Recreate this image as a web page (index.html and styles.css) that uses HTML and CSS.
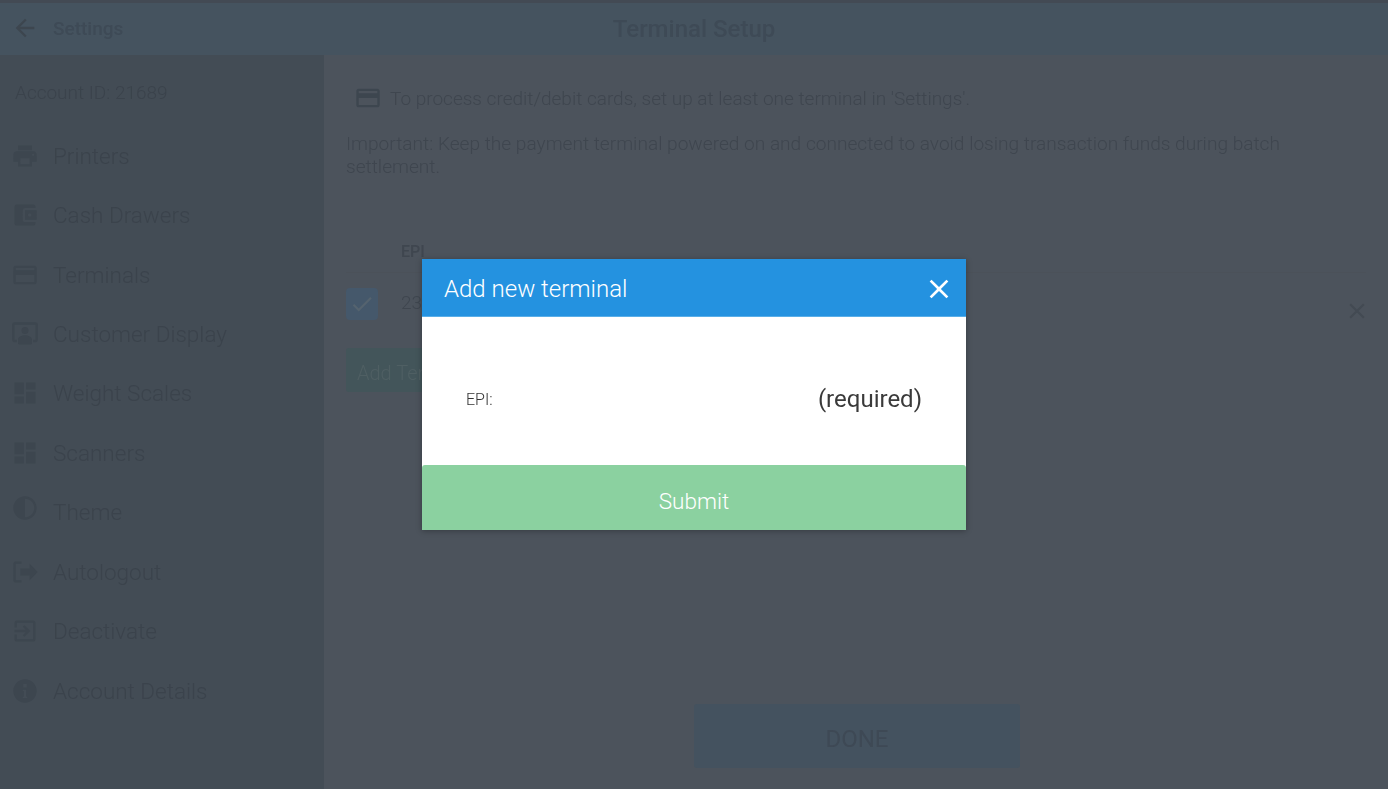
FILE: index.html
```html
<!DOCTYPE html>
<html lang="en">
<head>
  <meta charset="UTF-8">
  <title>Terminal Setup</title>
  <link rel="stylesheet" href="styles.css">
</head>
<body>
  <div class="app">
    <header class="topbar">
      <div class="back">
        <svg class="icon" viewBox="0 0 24 24"><path d="M20 11H7.830l5.590-5.590L12 4l-8 8 8 8 1.410-1.410L7.830 13H20v-2z"/></svg>
        <span>Settings</span>
      </div>
      <h1>Terminal Setup</h1>
    </header>
    <div class="main">
      <aside class="sidebar">
        <div class="account">Account ID: 21689</div>
        <ul class="menu">
          <li><svg class="icon" viewBox="0 0 24 24"><path d="M19 8H5c-1.660 0-3 1.340-3 3v6h4v4h12v-4h4v-6c0-1.660-1.340-3-3-3zm-3 11H8v-5h8v5zm3-7c-.55 0-1-.45-1-1s.45-1 1-1 1 .45 1 1-.45 1-1 1zm-1-9H6v4h12V3z"/></svg>Printers</li>
          <li><svg class="icon" viewBox="0 0 24 24"><path d="M21 18v1c0 1.100-.89 2-2 2H5c-1.110 0-2-.9-2-2V5c0-1.100.89-2 2-2h14c1.100 0 2 .9 2 2v1h-9c-1.110 0-2 .9-2 2v8c0 1.100.89 2 2 2h9zm-9-2h10V8H12v8zm4-2.500c-.83 0-1.500-.67-1.500-1.500s.67-1.500 1.500-1.500 1.500.67 1.500 1.500-.67 1.500-1.500 1.500z"/></svg>Cash Drawers</li>
          <li><svg class="icon" viewBox="0 0 24 24"><path d="M20 4H4c-1.110 0-1.990.89-1.990 2L2 18c0 1.110.89 2 2 2h16c1.110 0 2-.89 2-2V6c0-1.110-.89-2-2-2zm0 14H4v-6h16v6zm0-10H4V6h16v2z"/></svg>Terminals</li>
          <li><svg class="icon" viewBox="0 0 24 24"><path d="M21 2H3C1.900 2 1 2.900 1 4v13c0 1.100.9 2 2 2h2v-2H3V4h18v13h-2v2h2c1.100 0 2-.9 2-2V4c0-1.100-.9-2-2-2zM12 6a3 3 0 1 0 0 6 3 3 0 0 0 0-6zm0 7c-3 0-6 1.500-6 3.500V20c0 .6.4 1 1 1h10c.6 0 1-.4 1-1v-3.500c0-2-3-3.500-6-3.500z"/></svg>Customer Display</li>
          <li><svg class="icon" viewBox="0 0 24 24"><path d="M3 13h8V3H3v10zm0 8h8v-6H3v6zm10 0h8V11h-8v10zm0-18v6h8V3h-8z"/></svg>Weight Scales</li>
          <li><svg class="icon" viewBox="0 0 24 24"><path d="M3 13h8V3H3v10zm0 8h8v-6H3v6zm10 0h8V11h-8v10zm0-18v6h8V3h-8z"/></svg>Scanners</li>
          <li><svg class="icon icon-raised" viewBox="0 0 24 24"><path d="M12 2C6.500 2 2 6.500 2 12s4.500 10 10 10 10-4.500 10-10S17.500 2 12 2zm0 18V4c4.400 0 8 3.600 8 8s-3.600 8-8 8z"/></svg>Theme</li>
          <li><svg class="icon" viewBox="0 0 24 24"><path d="M9 3H4C2.900 3 2 3.900 2 5v14c0 1.100.9 2 2 2h5v-2H4V5h5V3zm14 9-7-7v4H8v6h8v4l7-7z"/></svg>Autologout</li>
          <li><svg class="icon" viewBox="0 0 24 24"><path d="M10.090 15.590 11.500 17l5-5-5-5-1.410 1.410L12.670 11H3v2h9.670l-2.580 2.590zM19 3H5c-1.110 0-2 .9-2 2v4h2V5h14v14H5v-4H3v4c0 1.100.89 2 2 2h14c1.100 0 2-.9 2-2V5c0-1.100-.9-2-2-2z"/></svg>Deactivate</li>
          <li><svg class="icon" viewBox="0 0 24 24"><path d="M12 2C6.480 2 2 6.480 2 12s4.480 10 10 10 10-4.480 10-10S17.520 2 12 2zm2 16h-4v-1h1v-5h-1v-1h3v6h1v1zM13.500 9h-3V6h3v3z"/></svg>Account Details</li>
        </ul>
      </aside>
      <section class="content">
        <p class="notice">
          <svg class="icon" viewBox="0 0 24 24"><path d="M20 4H4c-1.110 0-1.990.89-1.990 2L2 18c0 1.110.89 2 2 2h16c1.110 0 2-.89 2-2V6c0-1.110-.89-2-2-2zm0 14H4v-6h16v6zm0-10H4V6h16v2z"/></svg>
          To process credit/debit cards, set up at least one terminal in 'Settings'.
        </p>
        <p class="important">Important: Keep the payment terminal powered on and connected to avoid losing transaction funds during batch settlement.</p>
        <div class="table-head"><span>EPI</span></div>
        <div class="table-row">
          <span class="checkbox">
            <svg viewBox="0 0 24 24"><path d="M9 16.170 4.830 12l-1.420 1.410L9 19 21 7l-1.410-1.410z"/></svg>
          </span>
          <span class="epi-value">2389</span>
          <svg class="row-close" viewBox="0 0 24 24"><path d="M19 6.410 17.590 5 12 10.590 6.410 5 5 6.410 10.590 12 5 17.590 6.410 19 12 13.410 17.590 19 19 17.590 13.410 12z"/></svg>
        </div>
        <button class="add-btn">Add Terminal</button>
        <div class="footer">
          <button class="done-btn">DONE</button>
        </div>
      </section>
    </div>
  </div>

  <div class="modal">
    <div class="modal-head">
      <span>Add new terminal</span>
      <svg class="modal-close" viewBox="0 0 24 24"><path d="M19 6.410 17.590 5 12 10.590 6.410 5 5 6.410 10.590 12 5 17.590 6.410 19 12 13.410 17.590 19 19 17.590 13.410 12z"/></svg>
    </div>
    <div class="modal-body">
      <label for="epi">EPI:</label>
      <input type="text" id="epi" placeholder="(required)">
    </div>
    <button class="submit-btn">Submit</button>
  </div>
</body>
</html>
```

FILE: styles.css
```css
* {
  box-sizing: border-box;
}
body {
  margin: 0;
  height: 789px;
  overflow: hidden;
  font-family: Roboto, "Liberation Sans", sans-serif;
  background: #4c535c;
}
.app {
  height: 789px;
  display: flex;
  flex-direction: column;
  filter: blur(0.5px);
}
.topbar {
  height: 55px;
  flex: none;
  display: flex;
  align-items: center;
  justify-content: center;
  position: relative;
  background: #45535f;
  border-top: 3px solid #434a54;
  color: #3e4a56;
}
.topbar h1 {
  margin: 0;
  font-size: 24px;
  font-weight: 500;
}
.back {
  position: absolute;
  left: 11px;
  top: 11px;
  display: flex;
  align-items: center;
  gap: 14px;
  font-size: 19px;
  font-weight: 500;
}
.icon {
  width: 28px;
  height: 28px;
  flex: none;
  fill: #3d464f;
}
.main {
  flex: 1;
  display: flex;
  min-height: 0;
}
.sidebar {
  width: 324px;
  flex: none;
  background: #434c55;
  color: #3b434c;
  padding-left: 15px;
}
.account {
  height: 71px;
  padding-top: 26px;
  font-size: 19px;
  font-weight: 300;
  line-height: 24px;
}
.menu {
  list-style: none;
  margin: 0;
  padding: 0;
}
.menu li {
  height: 59.44px;
  display: flex;
  align-items: center;
  gap: 14px;
  margin-left: -4px;
  font-size: 22.5px;
  font-weight: 300;
}
.icon-raised {
  margin-top: -8px;
}
.content {
  flex: 1;
  display: flex;
  flex-direction: column;
  padding: 26px 22px 21px;
  color: #3f464f;
  font-weight: 300;
  font-size: 19px;
  line-height: 23px;
  background: #4c535c;
}
.notice {
  display: flex;
  align-items: center;
  gap: 8px;
  height: 34px;
  margin: 0 0 17px;
  padding-left: 8px;
}
.important {
  margin: 0;
  font-size: 19.1px;
}
.table-head {
  display: flex;
  align-items: center;
  height: 43px;
  margin-top: 52px;
  padding-left: 55px;
  font-size: 16px;
  font-weight: 500;
  border-bottom: 1px solid #4b5159;
}
.table-row {
  height: 62px;
  display: flex;
  align-items: center;
  position: relative;
}
.checkbox {
  width: 32px;
  height: 32px;
  border-radius: 4px;
  background: #45586b;
  display: flex;
  align-items: center;
  justify-content: center;
}
.checkbox svg {
  width: 26px;
  height: 26px;
  fill: #55636f;
}
.epi-value {
  margin: -4px 0 0 23px;
}
.row-close {
  position: absolute;
  right: -4px;
  top: 25px;
  width: 26px;
  height: 26px;
  fill: #434a53;
}
.add-btn {
  align-self: flex-start;
  width: 180px;
  height: 44px;
  margin-top: 13px;
  padding: 6px 0 0 11px;
  text-align: left;
  border: none;
  border-radius: 3px;
  background: #43555a;
  color: #4f5f63;
  font: 300 20px Roboto, sans-serif;
}
.footer {
  margin-top: auto;
  padding-left: 348px;
}
.done-btn {
  display: block;
  width: 326px;
  height: 64px;
  padding-top: 7px;
  border: none;
  border-radius: 3px;
  background: #44525f;
  color: #3e4955;
  font: 400 24px Roboto, sans-serif;
}
.modal {
  position: fixed;
  left: 422px;
  top: 259px;
  width: 544px;
  height: 271px;
  display: flex;
  flex-direction: column;
  background: #fff;
  box-shadow: 0 1px 6px rgba(0,0,0,0.3);
}
.modal-head {
  height: 58px;
  flex: none;
  display: flex;
  align-items: center;
  justify-content: space-between;
  padding: 2px 11px 0 22px;
  background: #2492e0;
  border-bottom: 1px solid #59aee8;
  color: #fff;
  font-size: 24px;
  font-weight: 300;
}
.modal-close {
  width: 32px;
  height: 32px;
  fill: #fff;
}
.modal-body {
  flex: 1;
  display: flex;
  align-items: center;
  padding: 16px 44px 0 44px;
}
.modal-body label {
  font-size: 16px;
  font-weight: 300;
  color: #333;
}
.modal-body input {
  flex: 1;
  min-width: 0;
  padding-right: 0;
  border: none;
  outline: none;
  text-align: right;
  font: 400 24px Roboto, sans-serif;
  color: #3a3a3a;
}
.modal-body input::placeholder {
  color: #3a3a3a;
  opacity: 1;
}
.submit-btn {
  height: 65px;
  flex: none;
  padding-top: 8px;
  border: none;
  border-radius: 3px 3px 0 0;
  background: #8bd1a0;
  color: #fff;
  font: 300 22.5px Roboto, sans-serif;
}
```
